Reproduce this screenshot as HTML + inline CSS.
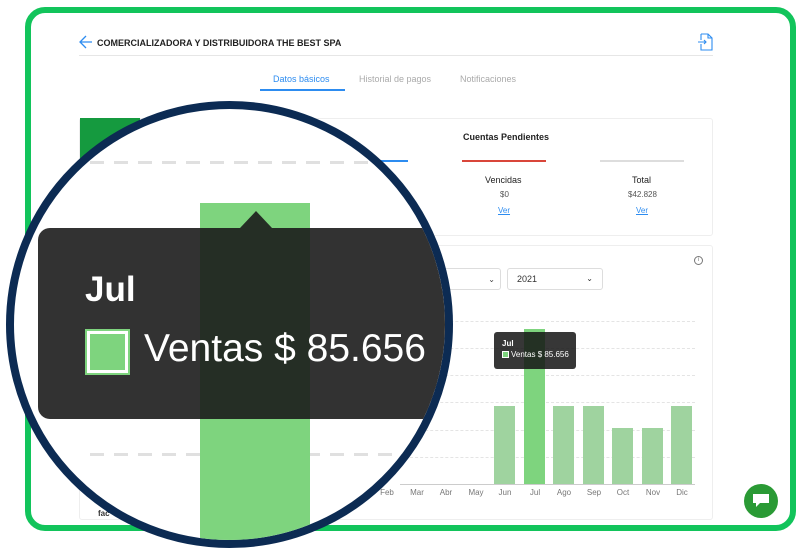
<!DOCTYPE html>
<html><head><meta charset="utf-8"><style>
*{margin:0;padding:0;box-sizing:border-box}
body{width:800px;height:556px;background:#fff;position:relative;overflow:hidden;font-family:"Liberation Sans",sans-serif}
.a{position:absolute}
.frame{left:25px;top:7px;width:771px;height:524px;border:6px solid #12c45b;border-radius:20px;background:#fff}
.t{font-size:9px;color:#888}
.bar{position:absolute;width:21px;background:#9fd39f;bottom:72px}
.ml{position:absolute;top:488px;font-size:8px;color:#777;width:30px;text-align:center}
.grid{position:absolute;left:400px;width:295px;border-top:1px dashed #e4e4e4}
.dash{position:absolute;height:3px;background:repeating-linear-gradient(90deg,#e0e0e0 0 14px,transparent 14px 24px)}
</style></head><body>
<div class="a frame"></div>
<svg class="a" style="left:78px;top:34px" width="16" height="16" viewBox="0 0 16 16"><path d="M14 8H2M8 2L2 8l6 6" fill="none" stroke="#2d8cf0" stroke-width="1.3"/></svg>
<div class="a" style="left:97px;top:38px;font-size:9px;font-weight:bold;color:#222">COMERCIALIZADORA Y DISTRIBUIDORA THE BEST SPA</div>
<svg class="a" style="left:697px;top:33px" width="16" height="18" viewBox="0 0 16 18"><path d="M4 1h7l4 4v12H4V11M4 7V1M11 1v4h4M1 9h8M7 7l2 2-2 2" fill="none" stroke="#2d8cf0" stroke-width="1.1"/></svg>
<div class="a" style="left:79px;top:55px;width:634px;border-top:1px solid #e6e6e6"></div>
<div class="a" style="left:273px;top:74px;font-size:9px;color:#2d8cf0">Datos básicos</div>
<div class="a" style="left:260px;top:89px;width:85px;height:2px;background:#2d8cf0"></div>
<div class="a t" style="left:359px;top:74px;color:#aaa">Historial de pagos</div>
<div class="a t" style="left:460px;top:74px;color:#aaa">Notificaciones</div>
<div class="a" style="left:79px;top:118px;width:634px;height:118px;border:1px solid #eee;border-radius:3px"></div>
<div class="a" style="left:80px;top:118px;width:60px;height:60px;background:#159a3f"></div>
<div class="a" style="left:463px;top:132px;font-size:9px;font-weight:bold;color:#222">Cuentas Pendientes</div>
<div class="a" style="left:462px;top:160px;width:84px;height:2px;background:#d9463a"></div>
<div class="a" style="left:600px;top:160px;width:84px;height:2px;background:#ddd"></div>
<div class="a" style="left:380px;top:160px;width:28px;height:2px;background:#2d8cf0"></div>
<div class="a" style="left:485px;top:175px;font-size:9px;color:#222">Vencidas</div>
<div class="a" style="left:500px;top:190px;font-size:8px;color:#555">$0</div>
<div class="a" style="left:498px;top:206px;font-size:8px;color:#2d8cf0;text-decoration:underline">Ver</div>
<div class="a" style="left:632px;top:175px;font-size:9px;color:#222">Total</div>
<div class="a" style="left:628px;top:190px;font-size:8px;color:#555">$42.828</div>
<div class="a" style="left:636px;top:206px;font-size:8px;color:#2d8cf0;text-decoration:underline">Ver</div>
<div class="a" style="left:79px;top:245px;width:634px;height:275px;border:1px solid #eee;border-radius:3px"></div>
<div class="a" style="left:694px;top:256px;width:9px;height:9px;border:1px solid #777;border-radius:50%;font-size:6px;text-align:center;line-height:7px;color:#777">i</div>
<div class="a" style="left:420px;top:268px;width:81px;height:22px;border:1px solid #ddd;border-radius:3px;font-size:8px;text-align:right;padding:6px 5px;color:#444">⌄</div>
<div class="a" style="left:507px;top:268px;width:96px;height:22px;border:1px solid #ddd;border-radius:3px;font-size:9px;padding:5px 9px;color:#333">2021<span style="float:right;font-size:8px">⌄</span></div>
<div class="grid" style="top:321px"></div><div class="grid" style="top:348px"></div><div class="grid" style="top:375px"></div><div class="grid" style="top:402px"></div><div class="grid" style="top:430px"></div><div class="grid" style="top:457px"></div>
<div class="a" style="left:400px;top:484px;width:295px;border-top:1px solid #ccc"></div>
<div class="bar" style="left:494px;height:78px"></div>
<div class="bar" style="left:524px;height:155px;background:#7ed47e"></div>
<div class="bar" style="left:553px;height:78px"></div>
<div class="bar" style="left:583px;height:78px"></div>
<div class="bar" style="left:612px;height:56px"></div>
<div class="bar" style="left:642px;height:56px"></div>
<div class="bar" style="left:671px;height:78px"></div>
<div class="ml" style="left:372px">Feb</div><div class="ml" style="left:402px">Mar</div><div class="ml" style="left:431px">Abr</div><div class="ml" style="left:461px">May</div><div class="ml" style="left:490px">Jun</div><div class="ml" style="left:520px">Jul</div><div class="ml" style="left:549px">Ago</div><div class="ml" style="left:579px">Sep</div><div class="ml" style="left:608px">Oct</div><div class="ml" style="left:638px">Nov</div><div class="ml" style="left:667px">Dic</div>
<div class="a" style="left:494px;top:332px;width:82px;height:37px;background:rgba(20,20,20,.85);border-radius:3px;color:#fff">
<div style="position:absolute;left:8px;top:7px;font-size:8px;font-weight:bold">Jul</div>
<div style="position:absolute;left:8px;top:19px;width:7px;height:7px;background:#7ed47e;border:1px solid #fff"></div>
<div style="position:absolute;left:17px;top:18px;font-size:8px">Ventas $ 85.656</div></div>
<div class="a" style="left:98px;top:509px;font-size:8px;font-weight:bold;color:#333">fac</div>
<div class="a" style="left:744px;top:484px;width:34px;height:34px;border-radius:50%;background:#2a9a35"></div>
<svg class="a" style="left:752px;top:493px" width="18" height="16" viewBox="0 0 18 16"><path d="M1 1h16v9H8l-4 4v-4H1z" fill="#fff"/></svg>
<div class="a" style="left:6px;top:101px;width:447px;height:447px;border-radius:50%;overflow:hidden;background:#fff;border:8px solid #0c2b53">
 <div class="a" style="left:-6px;top:-8px;width:440px;height:440px">
  <div class="dash" style="left:82px;top:60px;width:340px"></div>
  <div class="dash" style="left:82px;top:352px;width:340px"></div>
  <div class="a" style="left:192px;top:102px;width:110px;height:360px;background:#7ed47e"></div>
  <div class="a" style="left:30px;top:127px;width:420px;height:191px;background:rgba(28,28,28,.9);border-radius:12px"></div>
  <div class="a" style="left:232px;top:110px;width:0;height:0;border-left:16px solid transparent;border-right:16px solid transparent;border-bottom:17px solid rgba(28,28,28,.9)"></div>
  <div class="a" style="left:77px;top:169px;font-size:35px;font-weight:bold;color:#fff">Jul</div>
  <div class="a" style="left:79px;top:230px;width:41px;height:42px;background:#7ed47e;border:3px solid #fff;outline:2px solid #7ed47e"></div>
  <div class="a" style="left:136px;top:226px;font-size:39px;color:#fff">Ventas $ 85.656</div>
 </div>
</div>
</body></html>
